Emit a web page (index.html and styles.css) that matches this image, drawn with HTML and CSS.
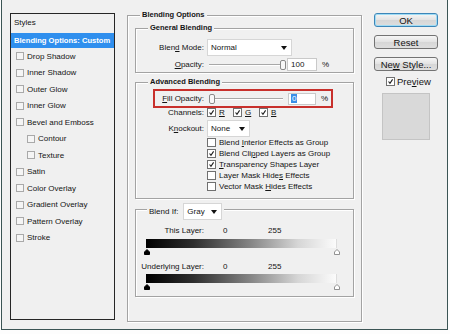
FILE: index.html
```html
<!DOCTYPE html>
<html>
<head>
<meta charset="utf-8">
<link rel="stylesheet" href="styles.css">
</head>
<body>
<div class="dialog">
  <div class="styles-panel">
    <div class="styles-head">Styles</div>
    <div class="style-row active">Blending Options: Custom</div>
    <div class="style-row"><span class="lcb"></span><span>Drop Shadow</span></div>
    <div class="style-row"><span class="lcb"></span><span>Inner Shadow</span></div>
    <div class="style-row"><span class="lcb"></span><span>Outer Glow</span></div>
    <div class="style-row"><span class="lcb"></span><span>Inner Glow</span></div>
    <div class="style-row"><span class="lcb"></span><span>Bevel and Emboss</span></div>
    <div class="style-row sub"><span class="lcb"></span><span>Contour</span></div>
    <div class="style-row sub"><span class="lcb"></span><span>Texture</span></div>
    <div class="style-row"><span class="lcb"></span><span>Satin</span></div>
    <div class="style-row"><span class="lcb"></span><span>Color Overlay</span></div>
    <div class="style-row"><span class="lcb"></span><span>Gradient Overlay</span></div>
    <div class="style-row"><span class="lcb"></span><span>Pattern Overlay</span></div>
    <div class="style-row"><span class="lcb"></span><span>Stroke</span></div>
  </div>

  <div class="group main-group">
    <span class="group-title">Blending Options</span>

    <div class="group general">
      <span class="group-title">General Blending</span>
      <div class="frow mode-row">
        <span class="flabel">Blen<u>d</u> Mode:</span>
        <div class="select select-mode"><span>Normal</span><i class="arrow"></i></div>
      </div>
      <div class="frow opacity-row">
        <span class="flabel"><u>O</u>pacity:</span>
        <div class="slider slider-op"><span class="track"></span><span class="knob"></span></div>
        <div class="num num-op">100</div>
        <span class="pct">%</span>
      </div>
    </div>

    <div class="group advanced">
      <span class="group-title">Advanced Blending</span>
      <div class="fill-box">
        <span class="flabel fill-label"><u>F</u>ill Opacity:</span>
        <div class="slider slider-fill"><span class="knob"></span><span class="track"></span></div>
        <div class="num num-fill"><span class="sel">0</span></div>
        <span class="pct">%</span>
      </div>
      <div class="frow channels-row">
        <span class="flabel">Channels:</span>
        <span class="ch"><span class="cb"><svg viewBox="0 0 9 9"><path d="M2 4.5 L3.8 6.8 L7.2 1.8"/></svg></span><u>R</u></span>
        <span class="ch"><span class="cb"><svg viewBox="0 0 9 9"><path d="M2 4.5 L3.8 6.8 L7.2 1.8"/></svg></span><u>G</u></span>
        <span class="ch"><span class="cb"><svg viewBox="0 0 9 9"><path d="M2 4.5 L3.8 6.8 L7.2 1.8"/></svg></span><u>B</u></span>
      </div>
      <div class="frow knock-row">
        <span class="flabel">K<u>n</u>ockout:</span>
        <div class="select select-knock"><span>None</span><i class="arrow"></i></div>
      </div>
      <div class="checks">
        <div class="check"><span class="cb"></span><span>Blend <u>I</u>nterior Effects as Group</span></div>
        <div class="check"><span class="cb"><svg viewBox="0 0 9 9"><path d="M2 4.5 L3.8 6.8 L7.2 1.8"/></svg></span><span>Blend Cli<u>p</u>ped Layers as Group</span></div>
        <div class="check"><span class="cb"><svg viewBox="0 0 9 9"><path d="M2 4.5 L3.8 6.8 L7.2 1.8"/></svg></span><span><u>T</u>ransparency Shapes Layer</span></div>
        <div class="check"><span class="cb"></span><span>Layer Mask Hide<u>s</u> Effects</span></div>
        <div class="check"><span class="cb"></span><span>Vector Mask <u>H</u>ides Effects</span></div>
      </div>
    </div>

    <div class="group blendif">
      <div class="group-title blendif-title">
        <span>Blend If:</span>
        <div class="select select-gray"><span>Gray</span><i class="arrow"></i></div>
      </div>
      <div class="frow range-row first">
        <span class="flabel">This Layer:</span>
        <span class="v0">0</span>
        <span class="v255">255</span>
      </div>
      <div class="gbar"></div>
      <div class="markers">
        <svg class="mk" viewBox="0 0 6 6"><path d="M3 0.5 L5.5 3 L5.5 5.5 L0.5 5.5 L0.5 3 Z" fill="#000" stroke="#000"/></svg>
        <svg class="mk" viewBox="0 0 6 6"><path d="M3 0.5 L5.5 3 L5.5 5.5 L0.5 5.5 L0.5 3 Z" fill="#fff" stroke="#777" stroke-width="0.8"/></svg>
      </div>
      <div class="frow range-row">
        <span class="flabel">Underlying Layer:</span>
        <span class="v0">0</span>
        <span class="v255">255</span>
      </div>
      <div class="gbar gbar2"></div>
      <div class="markers">
        <svg class="mk" viewBox="0 0 6 6"><path d="M3 0.5 L5.5 3 L5.5 5.5 L0.5 5.5 L0.5 3 Z" fill="#000" stroke="#000"/></svg>
        <svg class="mk" viewBox="0 0 6 6"><path d="M3 0.5 L5.5 3 L5.5 5.5 L0.5 5.5 L0.5 3 Z" fill="#fff" stroke="#777" stroke-width="0.8"/></svg>
      </div>
    </div>
  </div>

  <div class="side">
    <div class="btn btn-ok"><span>OK</span></div>
    <div class="btn"><span>Reset</span></div>
    <div class="btn"><span>Ne<u>w</u> Style...</span></div>
    <div class="preview-row"><span class="cb"><svg viewBox="0 0 9 9"><path d="M2 4.5 L3.8 6.8 L7.2 1.8"/></svg></span><span>Pre<u>v</u>iew</span></div>
    <div class="swatch"></div>
  </div>
</div>
</body>
</html>
```
FILE: styles.css
```css
* { box-sizing: border-box; }
html, body {
  margin: 0;
  padding: 0;
  background: #fdfdfd;
}
body {
  font-family: "Liberation Sans", Arial, sans-serif;
  font-size: 8px;
  color: #141414;
}
u { text-decoration: underline; text-underline-offset: 1px; }

.dialog {
  margin-left: 1px;
  width: 447px;
  height: 330px;
  background: #f0f0f0;
  border: 1px solid #3b5454;
  border-top: none;
  display: flex;
  align-items: flex-start;
  padding-left: 8px;
}

/* left style list */
.styles-panel {
  margin-top: 13px;
  width: 105px;
  height: 307px;
  border: 1px solid #262626;
  background: #f0f0f0;
}
.styles-head {
  height: 19px;
  line-height: 18px;
  padding-left: 3px;
}
.style-row {
  height: 16.5px;
  display: flex;
  align-items: center;
  padding-left: 5px;
}
.style-row.active {
  height: 15px;
  padding-left: 3px;
  background: #2f8fee;
  color: #fff;
  font-weight: bold;
  font-size: 7.6px;
}
.style-row.sub { padding-left: 16px; }
.lcb {
  width: 8px;
  height: 8px;
  border: 1px solid #a9a9a9;
  background: #f5f5f5;
  margin-right: 3px;
  flex: none;
}

/* group boxes */
.group {
  position: relative;
  border: 1px solid #a3a3a3;
  box-shadow: inset 1px 1px 0 #fff, 1px 1px 0 #fff;
}
.group-title {
  position: absolute;
  top: -6px;
  left: 12px;
  padding: 0 2px;
  line-height: 10px;
  background: #f0f0f0;
  font-weight: bold;
  font-size: 7.5px;
}
.main-group {
  margin-top: 15px;
  margin-left: 12px;
  width: 235px;
  height: 307px;
  padding: 12px 7px 0 7px;
}
.main-group > .group-title { left: 12px; }
.general {
  height: 45px;
}
.advanced {
  margin-top: 9px;
  height: 117px;
}
.blendif {
  margin-top: 10px;
  height: 88px;
}

.frow {
  display: flex;
  align-items: center;
}
.flabel {
  width: 68px;
  text-align: right;
  flex: none;
  white-space: nowrap;
}
.mode-row { margin-top: 10px; height: 17px; }
.opacity-row { margin-top: 2px; height: 13px; }

.select {
  height: 17px;
  background: #fff;
  border: 1px solid #d6d6d6;
  display: flex;
  align-items: center;
  justify-content: space-between;
  padding: 0 4px 0 3px;
}
.select-mode { margin-left: 3px; width: 85px; }
.select-knock { margin-left: 3px; width: 43px; }
.select-gray { margin-left: 5px; width: 39px; font-weight: normal; font-size: 8px; }
.arrow {
  width: 0;
  height: 0;
  border-left: 3px solid transparent;
  border-right: 3px solid transparent;
  border-top: 4px solid #111;
}

.slider {
  position: relative;
  display: flex;
  align-items: center;
  height: 11px;
}
.track {
  flex: 1;
  height: 2px;
  border-top: 1px solid #a8a8a8;
  border-bottom: 1px solid #fff;
}
.knob {
  width: 6px;
  height: 10px;
  border: 1px solid #8a8a8a;
  border-radius: 2px;
  background: #f8f8f8;
  flex: none;
}
.slider-op { margin-left: 5px; width: 77px; }
.num {
  height: 13px;
  background: #fff;
  border: 1px solid #c9c9c9;
  display: flex;
  align-items: center;
  padding-left: 3px;
}
.num-op { margin-left: 1px; width: 30px; }
.pct { margin-left: 5px; }

.fill-box {
  margin: 6px 0 0 17px;
  width: 180px;
  height: 19px;
  border: 2px solid #c8302c;
  display: flex;
  align-items: center;
}
.fill-label { width: 49px; }
.slider-fill { margin-left: 5px; width: 74px; }
.num-fill { margin-left: 5px; width: 28px; height: 12px; padding-left: 2px; }
.sel {
  background: #3a8fe8;
  color: #fff;
  padding: 0 1px;
  line-height: 9px;
}

.channels-row { height: 9px; }
.ch {
  display: flex;
  align-items: center;
  margin-left: 3px;
  width: 23px;
}
.ch:nth-of-type(4) { width: 25px; }
.cb {
  width: 9px;
  height: 9px;
  border: 1px solid #707070;
  background: #fff;
  margin-right: 3px;
  flex: none;
  display: flex;
}
.cb svg {
  width: 7px;
  height: 7px;
  fill: none;
  stroke: #1c1c1c;
  stroke-width: 1.4;
}
.knock-row { margin-top: 3px; height: 17px; }

.checks { margin-left: 71px; }
.check {
  height: 11px;
  display: flex;
  align-items: center;
}

.blendif-title {
  top: -7px;
  left: 11px;
  display: flex;
  align-items: center;
  padding: 0 2px;
  font-weight: normal;
  font-size: 8px;
}
.range-row { height: 10px; margin-top: 6px; }
.range-row.first { margin-top: 15px; }
.v0 { margin-left: 19px; width: 45px; }
.gbar {
  margin: 4px 0 0 10px;
  width: 191px;
  height: 9px;
  background: linear-gradient(to right, #000 0%, #2e2e2e 25%, #858585 55%, #d6d6d6 80%, #fbfbfb 100%);
  border-right: 1px solid #ddd;
}
.gbar2 { margin-top: 3px; }
.markers {
  margin-left: 8px;
  width: 196px;
  height: 7px;
  display: flex;
  justify-content: space-between;
  align-items: flex-end;
}
.mk { width: 6px; height: 6px; display: block; }

/* right column */
.side {
  margin-left: 12px;
  margin-top: 13px;
  width: 64px;
  display: flex;
  flex-direction: column;
}
.btn {
  height: 14px;
  margin-bottom: 8px;
  border: 1px solid #737373;
  border-radius: 3px;
  background: linear-gradient(#f6f6f6, #e2e2e2 50%, #d6d6d6 51%, #dedede);
  display: flex;
  align-items: center;
  justify-content: center;
  font-size: 9.5px;
}
.btn-ok {
  border-color: #3d86b8;
  box-shadow: inset 0 0 0 1px #9fdcf5;
}
.preview-row {
  margin-top: -2px;
  margin-left: 12px;
  height: 9px;
  display: flex;
  align-items: center;
  font-size: 9.5px;
}
.preview-row .cb { margin-right: 2px; }
.swatch {
  margin-top: 7px;
  margin-left: 8px;
  width: 48px;
  height: 47px;
  background: #d9d9d9;
  border: 1px solid #c4c4c4;
}
```
